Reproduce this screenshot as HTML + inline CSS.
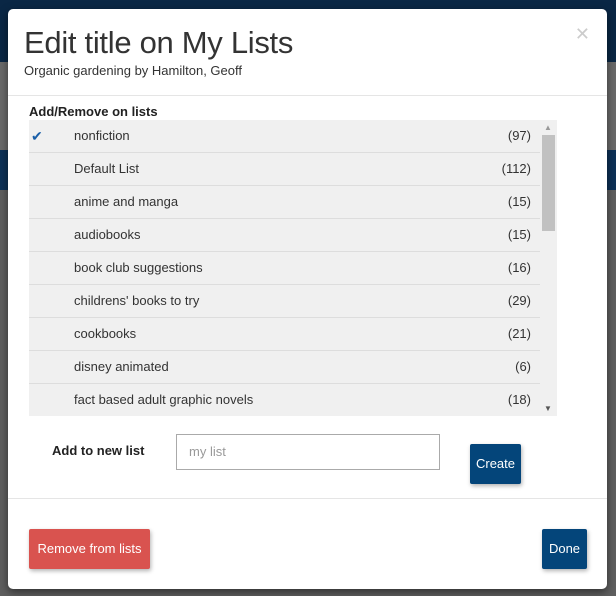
<!DOCTYPE html>
<html><head><style>
body{margin:0;width:616px;height:596px;overflow:hidden;background:#5f5f5f;font-family:"Liberation Sans",sans-serif;position:relative}
.bg1{position:absolute;left:0;top:0;width:616px;height:62px;background:#0a2745}
.bg2{position:absolute;left:0;top:150px;width:616px;height:40px;background:#0d3157}
.bg3{position:absolute;left:0;top:62px;width:616px;height:88px;background:#6a6a6a}
.modal{position:absolute;left:8px;top:9px;width:599px;height:580px;background:#fff;border-radius:5px;box-shadow:0 3px 9px rgba(0,0,0,.5)}
h1{position:absolute;left:16px;top:16px;margin:0;font-weight:normal;font-size:31px;color:#333;letter-spacing:-0.3px}
.sub{position:absolute;left:16px;top:54px;font-size:13px;color:#333}
.x{position:absolute;right:17px;top:15px;font-size:18px;color:#ccc}
.hr{position:absolute;left:0;width:599px;height:1px;background:#e5e5e5}
.lbl{position:absolute;left:21px;top:95px;font-size:13px;font-weight:bold;color:#222}
.list{position:absolute;left:21px;top:111px;width:528px;height:296px;background:#f0f0f0;overflow:hidden}
.row{height:32px;border-bottom:1px solid #ddd;width:511px;position:relative;font-size:13px;color:#333;line-height:32px}
.row .n{position:absolute;left:45px}
.row .c{position:absolute;right:9px}
.row .k{position:absolute;left:2px;color:#1a5fa8;font-size:14px}
.sb{position:absolute;left:513px;top:15px;width:13px;height:96px;background:#c1c1c1}
.au{position:absolute;left:515px;top:3px;font-size:8px;color:#999}
.ad{position:absolute;left:515px;top:284px;font-size:8px;color:#555}
.nl{position:absolute;left:44px;top:434px;font-size:13px;font-weight:bold;color:#222}
.inp{position:absolute;left:168px;top:425px;font-size:13px;color:#999;line-height:34px;padding-left:12px;box-sizing:border-box;width:264px;height:36px;border:1px solid #aaa}
.btn{position:absolute;color:#fff;font-size:13px;text-align:center;border-radius:2px;box-shadow:1px 2px 4px rgba(0,0,0,.3)}
</style></head><body>
<div class="bg1"></div><div class="bg3"></div><div class="bg2"></div>
<div class="modal">
<h1>Edit title on My Lists</h1>
<div class="sub">Organic gardening by Hamilton, Geoff</div>
<div class="x">✕</div>
<div class="hr" style="top:86px"></div>
<div class="lbl">Add/Remove on lists</div>
<div class="list">
<div class="row"><span class="k">✔</span><span class="n">nonfiction</span><span class="c">(97)</span></div>
<div class="row"><span class="n">Default List</span><span class="c">(112)</span></div>
<div class="row"><span class="n">anime and manga</span><span class="c">(15)</span></div>
<div class="row"><span class="n">audiobooks</span><span class="c">(15)</span></div>
<div class="row"><span class="n">book club suggestions</span><span class="c">(16)</span></div>
<div class="row"><span class="n">childrens' books to try</span><span class="c">(29)</span></div>
<div class="row"><span class="n">cookbooks</span><span class="c">(21)</span></div>
<div class="row"><span class="n">disney animated</span><span class="c">(6)</span></div>
<div class="row"><span class="n">fact based adult graphic novels</span><span class="c">(18)</span></div>
<div class="sb"></div><div class="au">▲</div><div class="ad">▼</div>
</div>
<div class="nl">Add to new list</div>
<div class="inp">my list</div>
<div class="btn" style="left:462px;top:435px;width:51px;height:40px;line-height:40px;background:#04457a">Create</div>
<div class="hr" style="top:489px"></div>
<div class="btn" style="left:21px;top:520px;width:121px;height:40px;line-height:40px;background:#d9534f">Remove from lists</div>
<div class="btn" style="left:534px;top:520px;width:45px;height:40px;line-height:40px;background:#04457a">Done</div>
</div>
</body></html>
